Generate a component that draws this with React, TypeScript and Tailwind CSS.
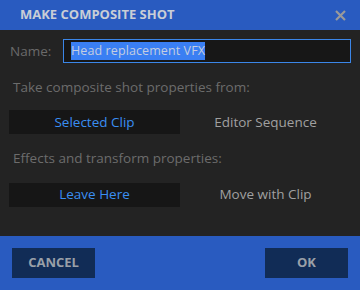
export default function App() {
  return (
    <div className="flex h-[290px] w-[360px] flex-col bg-[#232323] font-['Open_Sans',sans-serif]">
      <div className="flex h-[30px] shrink-0 items-center justify-between bg-[#295bc0] pl-[20px] pr-[14px]">
        <span className="text-[13px] font-bold text-[#c9ced6]">MAKE COMPOSITE SHOT</span>
        <svg width="11" height="11" viewBox="0 0 11 11" className="mt-[1px]">
          <path d="M1 1L10 10M10 1L1 10" stroke="#9a9a9a" strokeWidth="2.2" />
        </svg>
      </div>

      <div className="flex flex-1 flex-col px-[9px]">
        <div className="mt-[9px] flex items-center">
          <span className="w-[54px] pl-[1px] text-[13.5px] text-[#6a6a6a]">Name:</span>
          <div className="flex h-[24px] flex-1 items-center border border-[#3b86e8] bg-[#171717] pl-[7px]">
            <span className="bg-[#3a7ff3] text-[12.5px] leading-[18px] tracking-[0.1px] text-[#c4cde0]">Head replacement VFX</span>
          </div>
        </div>

        <div className="mt-[14px] pl-[4px] text-[13.5px] text-[#6c6c6c]">Take composite shot properties from:</div>
        <div className="mt-[13px] flex h-[24px]">
          <div className="flex w-[171px] items-center justify-center bg-[#161616] text-[13.5px] text-[#3a8ef2]">Selected Clip</div>
          <div className="flex flex-1 items-center justify-center text-[13.5px] text-[#a0a0a0]">Editor Sequence</div>
        </div>

        <div className="mt-[14px] pl-[4px] text-[13.5px] text-[#6c6c6c]">Effects and transform properties:</div>
        <div className="mt-[14px] flex h-[24px]">
          <div className="flex w-[171px] items-center justify-center bg-[#161616] text-[13.5px] text-[#3a8ef2]">Leave Here</div>
          <div className="flex flex-1 items-center justify-center text-[13.5px] text-[#a0a0a0]">Move with Clip</div>
        </div>
      </div>

      <div className="flex h-[54px] shrink-0 items-center justify-between bg-[#295bc0] px-[12px]">
        <button className="h-[30px] w-[83px] bg-[#112c56] text-[13px] font-bold text-[#9aa0a8]">CANCEL</button>
        <button className="h-[30px] w-[83px] bg-[#112c56] text-[13px] font-bold text-[#9aa0a8]">OK</button>
      </div>
    </div>
  );
}
